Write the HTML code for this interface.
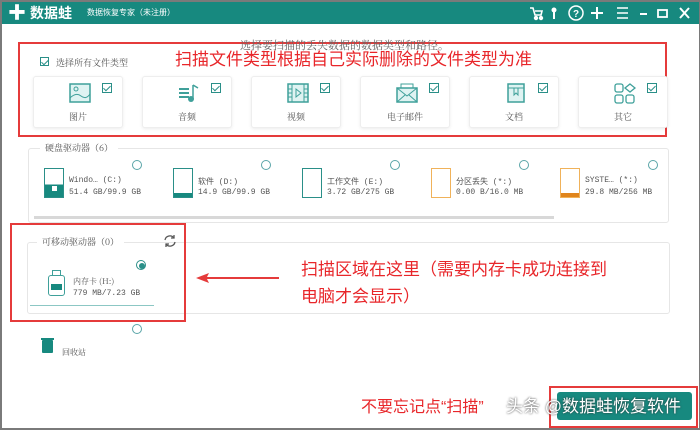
<!DOCTYPE html>
<html><head><meta charset="utf-8">
<style>
*{margin:0;padding:0;box-sizing:border-box}
body{width:700px;height:430px;background:#fff;position:relative;overflow:hidden;font-family:"Liberation Sans","Noto Sans CJK SC",sans-serif}
.a{position:absolute}
.t{font-family:"Noto Serif CJK SC","Liberation Serif",serif;color:#555;font-size:9px;white-space:nowrap}
.red{color:#e8262a;font-family:"Liberation Sans","Noto Sans CJK SC",sans-serif;white-space:nowrap}
.card{position:absolute;top:76px;width:90px;height:52px;border:1px solid #eee;border-radius:3px;box-shadow:0 1px 3px rgba(0,0,0,.08);background:#fff}
.cb{position:absolute;width:10px;height:10px;border:1px solid #2a8f88}
.card .cb{left:68px;top:6px}
.cb:after{content:"";position:absolute;left:2px;top:0px;width:3px;height:6px;border:solid #2a8f88;border-width:0 1.5px 1.5px 0;transform:rotate(45deg)}
.card .lb{position:absolute;top:33px;left:0;width:100%;text-align:center}
.card svg{position:absolute;left:35px;top:6px}
.rad{position:absolute;width:10px;height:10px;border:1px solid #5aa5a8;border-radius:50%}
.drv{position:absolute;top:168px;width:20px;height:30px;border:1px solid #2a8f88}
</style></head><body>
<div class="a" style="left:0;top:0;width:700px;height:430px;border:2px solid #7a7a7a;border-right-width:1px;border-bottom-width:2px"></div>
<div class="a" style="left:2px;top:2px;width:697px;height:22px;background:#17897f"></div>
<div class="a" style="left:8px;top:4px;color:#fff;font-size:18px;font-weight:bold;line-height:18px">✚</div>
<div class="a" style="left:30px;top:5px;color:#fff;font-size:14px;font-weight:bold;line-height:16px">数据蛙</div>
<div class="a" style="left:87px;top:8px;color:#fff;font-size:8px;line-height:10px">数据恢复专家（未注册）</div>
<svg class="a" style="left:525px;top:3px" width="175" height="20" viewBox="0 0 175 20" fill="none" stroke="#fff" stroke-width="2">
<path d="M5 5h3l2 7h6l1-4h-7" stroke-width="1.6"/><circle cx="11" cy="15" r="1.2" fill="#fff"/><circle cx="16" cy="15" r="1.2" fill="#fff"/>
<circle cx="29" cy="7" r="2.5" fill="#fff" stroke="none"/><path d="M29 8v8"/>
<circle cx="51" cy="10" r="7" stroke-width="1.5"/><text x="48" y="14" fill="#fff" stroke="none" font-size="10" font-weight="bold" font-family="Liberation Sans">?</text>
<path d="M72 4v12M66 10h12"/>
<path d="M92 5h11M92 10h11M92 15h11" stroke-width="1.5"/>
<path d="M115 11h7"/>
<rect x="133" y="7" width="9" height="7" stroke-width="1.8"/>
<path d="M155 5l9 10M164 5l-9 10"/>
</svg>

<div class="a" style="left:18px;top:42px;width:649px;height:95px;border:2px solid #e53b3b"></div>
<div class="a t" style="left:240px;top:37px;font-size:11px;color:#666">选择要扫描的丢失数据的数据类型和路径。</div>
<div class="a red" style="left:175px;top:50px;font-size:17px;line-height:20px">扫描文件类型根据自己实际删除的文件类型为准</div>
<div class="cb" style="left:40px;top:57px;width:9px;height:9px"></div>
<div class="a t" style="left:56px;top:56px">选择所有文件类型</div>

<div class="card" style="left:33px"><svg width="22" height="20" viewBox="0 0 22 20"><rect x="1" y="1" width="20" height="18" fill="#dff3f2" stroke="#3fa09a" stroke-width="1.5"/><circle cx="7" cy="6" r="2" fill="none" stroke="#3fa09a"/><path d="M1 15 Q7 9 12 13 T21 11" fill="none" stroke="#3fa09a"/></svg><div class="cb"></div><div class="lb t">图片</div></div>
<div class="card" style="left:142px"><svg width="22" height="20" viewBox="0 0 22 20"><path d="M1 6h10M1 10h10M1 14h10" stroke="#3fa09a" stroke-width="2"/><path d="M15 2v14" stroke="#3fa09a" stroke-width="1.5"/><circle cx="13" cy="16" r="3" fill="#3fa09a"/><path d="M15 2l5 3" stroke="#3fa09a" stroke-width="1.5"/></svg><div class="cb"></div><div class="lb t">音频</div></div>
<div class="card" style="left:251px"><svg width="22" height="20" viewBox="0 0 22 20"><rect x="1" y="1" width="20" height="18" fill="#dff3f2" stroke="#3fa09a" stroke-width="1.5"/><path d="M5 1v18M17 1v18M1 6h4M1 10h4M1 14h4M17 6h4M17 10h4M17 14h4" stroke="#3fa09a"/><path d="M9 6l5 4-5 4z" fill="none" stroke="#3fa09a"/></svg><div class="cb"></div><div class="lb t">视频</div></div>
<div class="card" style="left:360px"><svg width="22" height="20" viewBox="0 0 22 20"><rect x="1" y="5" width="20" height="14" fill="#dff3f2" stroke="#3fa09a" stroke-width="1.5"/><path d="M1 5l10 8 10-8M1 19l8-7M21 19l-8-7M5 5V1h12v4" fill="none" stroke="#3fa09a"/></svg><div class="cb"></div><div class="lb t">电子邮件</div></div>
<div class="card" style="left:469px"><svg width="22" height="20" viewBox="0 0 22 20"><rect x="3" y="1" width="16" height="18" fill="#dff3f2" stroke="#3fa09a" stroke-width="1.5"/><path d="M3 5h16M9 5v7l2-2 2 2V5" fill="none" stroke="#3fa09a"/></svg><div class="cb"></div><div class="lb t">文档</div></div>
<div class="card" style="left:578px"><svg width="22" height="22" viewBox="0 0 22 22"><rect x="1" y="1" width="8" height="8" rx="2" fill="none" stroke="#3fa09a" stroke-width="1.3"/><path d="M16 1l5 4-5 4-5-4z" fill="none" stroke="#3fa09a" stroke-width="1.3"/><rect x="1" y="12" width="8" height="8" rx="2" fill="none" stroke="#3fa09a" stroke-width="1.3"/><rect x="12" y="12" width="8" height="8" rx="2" fill="none" stroke="#3fa09a" stroke-width="1.3"/></svg><div class="cb"></div><div class="lb t">其它</div></div>

<div class="a" style="left:28px;top:148px;width:641px;height:75px;border:1px solid #e6e6e6;border-radius:3px"></div>
<div class="a t" style="left:40px;top:141px;background:#fff;padding:0 5px">硬盘驱动器（6）</div>
<div class="a" style="left:34px;top:216px;width:520px;height:3px;background:#d8d8d8"></div>

<div class="drv" style="left:44px;background:linear-gradient(#fff 55%,#17897f 55%)"></div>
<div class="a" style="left:52px;top:186px;width:5px;height:5px;background:#fff"></div>
<div class="a t" style="left:69px;top:176px;font-family:'Liberation Mono','Noto Sans CJK SC',monospace;font-size:8px">Windo… (C:)</div>
<div class="a t" style="left:69px;top:188px;font-family:'Liberation Mono',monospace;font-size:8px">51.4 GB/99.9 GB</div>
<div class="rad" style="left:132px;top:160px"></div>

<div class="drv" style="left:173px;background:linear-gradient(#fff 86%,#17897f 86%)"></div>
<div class="a t" style="left:198px;top:176px;font-family:'Liberation Mono','Noto Sans CJK SC',monospace;font-size:8px">软件 (D:)</div>
<div class="a t" style="left:198px;top:188px;font-family:'Liberation Mono',monospace;font-size:8px">14.9 GB/99.9 GB</div>
<div class="rad" style="left:261px;top:160px"></div>

<div class="drv" style="left:302px"></div>
<div class="a t" style="left:327px;top:176px;font-family:'Liberation Mono','Noto Sans CJK SC',monospace;font-size:8px">工作文件 (E:)</div>
<div class="a t" style="left:327px;top:188px;font-family:'Liberation Mono',monospace;font-size:8px">3.72 GB/275 GB</div>
<div class="rad" style="left:390px;top:160px"></div>

<div class="drv" style="left:431px;border-color:#f0b25a"></div>
<div class="a t" style="left:456px;top:176px;font-family:'Liberation Mono','Noto Sans CJK SC',monospace;font-size:8px">分区丢失 (*:)</div>
<div class="a t" style="left:456px;top:188px;font-family:'Liberation Mono',monospace;font-size:8px">0.00  B/16.0 MB</div>
<div class="rad" style="left:519px;top:160px"></div>

<div class="drv" style="left:560px;border-color:#f0b25a;background:linear-gradient(#fff 86%,#e0851d 86%)"></div>
<div class="a t" style="left:585px;top:176px;font-family:'Liberation Mono','Noto Sans CJK SC',monospace;font-size:8px">SYSTE… (*:)</div>
<div class="a t" style="left:585px;top:188px;font-family:'Liberation Mono',monospace;font-size:8px">29.8 MB/256 MB</div>
<div class="rad" style="left:648px;top:160px"></div>

<div class="a" style="left:27px;top:242px;width:643px;height:72px;border:1px solid #e6e6e6;border-radius:3px"></div>
<div class="a t" style="left:37px;top:235px;background:#fff;padding:0 5px">可移动驱动器（0）</div>
<svg class="a" style="left:163px;top:234px" width="14" height="14" viewBox="0 0 14 14" fill="none" stroke="#555" stroke-width="1.3"><path d="M2 6a5 5 0 0 1 9-2M12 8a5 5 0 0 1-9 2"/><path d="M11 1v3H8M3 13v-3h3"/></svg>
<div class="a" style="left:10px;top:223px;width:176px;height:99px;border:2px solid #e53b3b"></div>
<div class="rad" style="left:136px;top:260px;border-color:#2a8f88"></div>
<div class="a" style="left:139px;top:263px;width:6px;height:6px;border-radius:50%;background:#2a8f88"></div>
<div class="a" style="left:52px;top:270px;width:9px;height:6px;border:1px solid #3fa09a"></div>
<div class="a" style="left:48px;top:275px;width:17px;height:21px;border:1.5px solid #3fa09a;border-radius:3px"></div>
<div class="a" style="left:51px;top:284px;width:11px;height:6px;background:#17897f"></div>
<div class="a t" style="left:73px;top:276px;font-size:8px">内存卡 (H:)</div>
<div class="a t" style="left:73px;top:289px;font-family:'Liberation Mono',monospace;font-size:8px">779 MB/7.23 GB</div>
<div class="a" style="left:30px;top:305px;width:124px;height:1px;background:#8cc7c4"></div>
<div class="rad" style="left:132px;top:324px"></div>

<div class="a" style="left:42px;top:340px;width:11px;height:13px;background:#17897f;border-radius:1px"></div>
<div class="a" style="left:41px;top:338px;width:13px;height:2px;background:#17897f"></div>
<div class="a t" style="left:62px;top:347px;font-size:8px">回收站</div>

<svg class="a" style="left:193px;top:271px" width="90" height="14"><path d="M3 7 L16 2 L14 6 L86 6 L86 8 L14 8 L16 12 Z" fill="#e53b3b"/></svg>
<div class="a red" style="left:301px;top:256px;font-size:17px;line-height:27px">扫描区域在这里（需要内存卡成功连接到<br>电脑才会显示）</div>

<div class="a red" style="left:361px;top:398px;font-size:16px;line-height:20px">不要忘记点“扫描”</div>
<div class="a" style="left:549px;top:386px;width:149px;height:42px;border:2px solid #e53b3b"></div>
<div class="a" style="left:557px;top:392px;width:135px;height:28px;background:#17897f;border-radius:3px"></div>
<div class="a" style="left:506px;top:396px;font-size:17px;line-height:22px;color:#fff;white-space:nowrap;text-shadow:0 0 2px #333">头条 @数据蛙恢复软件</div>
</body></html>
